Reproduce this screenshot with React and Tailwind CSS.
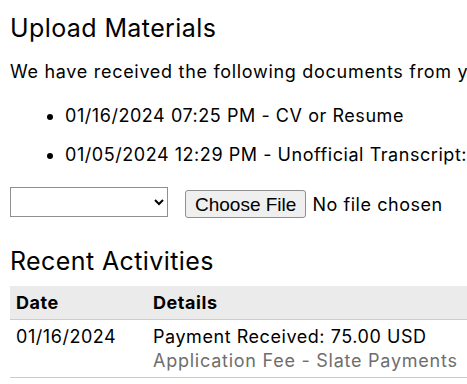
import React from 'react';

const docs = [
  '01/16/2024 07:25 PM - CV or Resume',
  '01/05/2024 12:29 PM - Unofficial Transcript: University of Example',
];

export default function App() {
  return (
    <div className="w-[467px] h-[384px] overflow-hidden bg-white text-black" style={{ fontFamily: 'Inter, "Noto Sans", sans-serif' }}>
      <div className="w-[760px] px-[10px] pt-[12px] text-[18px] tracking-[0.55px]">
        <h2 className="text-[25px] leading-[32px] font-normal tracking-[0.4px]">Upload Materials</h2>
        <p className="mt-[16px] leading-[24px] whitespace-nowrap tracking-[0.7px]">We have received the following documents from your application.</p>
        <ul className="mt-[20px] list-disc pl-[55px] space-y-[15px]">
          {docs.map((d) => (
            <li key={d} className="leading-[24px] whitespace-nowrap">{d}</li>
          ))}
        </ul>
        <div className="mt-[20px] flex items-start gap-[17px]">
          <select className="w-[158px] h-[30px] border border-[#8f8f8f] bg-white text-[15px] appearance-auto">
            <option value=""></option>
          </select>
          <input
            type="file"
            className="mt-[3px] h-[28px] text-[18px] file:mr-[6px] file:h-[28px] file:border file:border-[#8f8f8f] file:rounded-[3px] file:bg-[#efefef] file:px-[9px] file:text-[19px] file:tracking-normal file:font-['Liberation_Sans',Arial,sans-serif]"
          />
        </div>
        <h2 className="mt-[27px] text-[25px] leading-[32px] font-normal tracking-[0.4px]">Recent Activities</h2>
        <table className="mt-[9px] w-[470px] border-collapse">
          <thead>
            <tr className="bg-[#ebebeb] border-b border-[#cccccc]">
              <th className="text-left font-bold w-[143px] pl-[6px] pt-[5px] pb-[4px] leading-[24px]">Date</th>
              <th className="text-left font-bold pt-[5px] pb-[4px] leading-[24px]">Details</th>
            </tr>
          </thead>
          <tbody>
            <tr className="border-b border-[#cccccc] align-top">
              <td className="pl-[6px] pt-[5px] pb-[4px] leading-[24px]">01/16/2024</td>
              <td className="pt-[5px] pb-[4px] leading-[24px] whitespace-nowrap">
                <div>Payment Received: 75.00 USD</div>
                <div className="text-[#6e6e6e] tracking-[0.75px]">Application Fee - Slate Payments</div>
              </td>
            </tr>
          </tbody>
        </table>
      </div>
    </div>
  );
}
